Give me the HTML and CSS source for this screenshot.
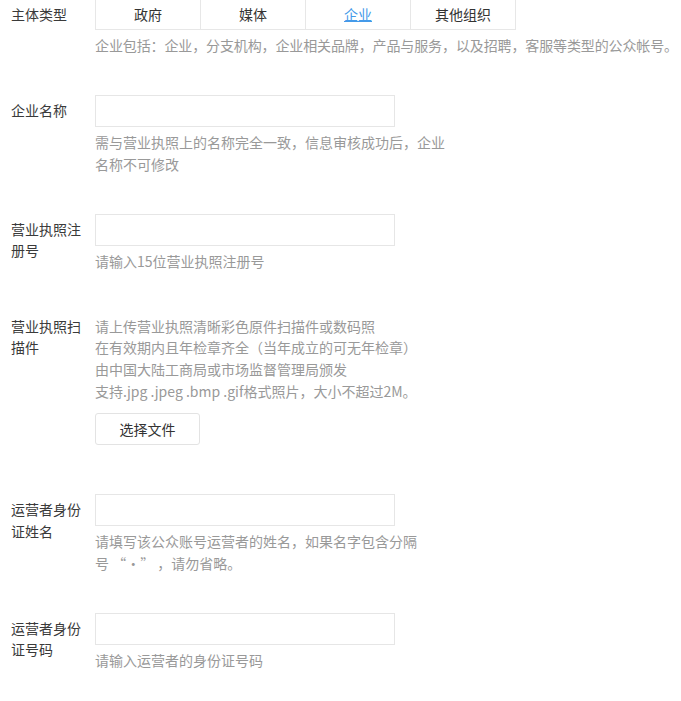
FILE: index.html
```html
<!DOCTYPE html>
<html lang="zh-CN">
<head>
  <meta charset="UTF-8">
  <meta name="viewport" content="width=device-width, initial-scale=1.0">
  <title>主体信息登记</title>
  <link rel="stylesheet" href="styles.css">
</head>
<body>
  <form class="form">
    <!-- 主体类型 -->
    <div class="row">
      <div class="label label-top">主体类型</div>
      <div class="field field-wide">
        <div class="tabs">
          <a class="tab">政府</a>
          <a class="tab">媒体</a>
          <a class="tab active">企业</a>
          <a class="tab">其他组织</a>
        </div>
        <p class="tip tip-wide">企业包括：企业，分支机构，企业相关品牌，产品与服务，以及招聘，客服等类型的公众帐号。</p>
      </div>
    </div>

    <div class="row">
      <div class="label">企业名称</div>
      <div class="field">
        <input class="text-input" type="text">
        <p class="tip">需与营业执照上的名称完全一致，信息审核成功后，企业名称不可修改</p>
      </div>
    </div>

    <div class="row">
      <div class="label">营业执照注册号</div>
      <div class="field">
        <input class="text-input" type="text">
        <p class="tip">请输入15位营业执照注册号</p>
      </div>
    </div>

    <div class="row">
      <div class="label">营业执照扫描件</div>
      <div class="field">
        <p class="tip">请上传营业执照清晰彩色原件扫描件或数码照<br>在有效期内且年检章齐全（当年成立的可无年检章）<br>由中国大陆工商局或市场监督管理局颁发<br>支持.jpg .jpeg .bmp .gif格式照片，大小不超过2M。</p>
        <button class="file-btn" type="button">选择文件</button>
      </div>
    </div>

    <div class="row">
      <div class="label">运营者身份证姓名</div>
      <div class="field">
        <input class="text-input" type="text">
        <p class="tip">请填写该公众账号运营者的姓名，如果名字包含分隔<span class="nobr">号 “·” </span>，请勿省略。</p>
      </div>
    </div>

    <div class="row">
      <div class="label">运营者身份证号码</div>
      <div class="field">
        <input class="text-input" type="text">
        <p class="tip">请输入运营者的身份证号码</p>
      </div>
    </div>
  </form>
</body>
</html>
```

FILE: styles.css
```css
html, body {
  margin: 0;
  padding: 0;
  background: #fff;
  font-family: "Noto Sans CJK SC", "Liberation Sans", sans-serif;
  font-size: 14px;
  color: #333;
}
.form {
  padding-left: 11px;
}
.row {
  display: flex;
  margin-bottom: 38.5px;
}
.label {
  width: 74px;
  margin-right: 10px;
  flex-shrink: 0;
  padding-top: 5px;
  line-height: 21.6px;
  color: #3a3a3a;
}
.label-top {
  padding-top: 4px;
}
.field {
  width: 350px;
}
.field-wide {
  width: auto;
  flex: 1;
}

/* 主体类型のタブ */
.tabs {
  display: flex;
  border-right: 1px solid #e7e7e7;
  width: max-content;
}
.tab {
  box-sizing: border-box;
  width: 105px;
  height: 30px;
  line-height: 29px;
  text-align: center;
  border-left: 1px solid #e7e7e7;
  border-bottom: 1px solid #e7e7e7;
  color: #333;
}
.tab.active {
  color: #459ae9;
  text-decoration: underline;
}

.text-input {
  display: block;
  box-sizing: border-box;
  width: 300px;
  height: 32px;
  margin: 0;
  border: 1px solid #e6e6e6;
  padding: 0 8px;
  outline: none;
}
.tip {
  margin: 5px 0 0;
  line-height: 21.6px;
  color: #999;
}
.tip-wide {
  letter-spacing: -0.12px;
  white-space: nowrap;
}
.nobr {
  white-space: nowrap;
}
.file-btn {
  display: block;
  box-sizing: border-box;
  width: 105px;
  height: 32px;
  margin: 10.7px 0 10.5px;
  border: 1px solid #e3e3e3;
  border-radius: 3px;
  background: #fff;
  font-family: inherit;
  font-size: 14px;
  color: #333;
}
```
